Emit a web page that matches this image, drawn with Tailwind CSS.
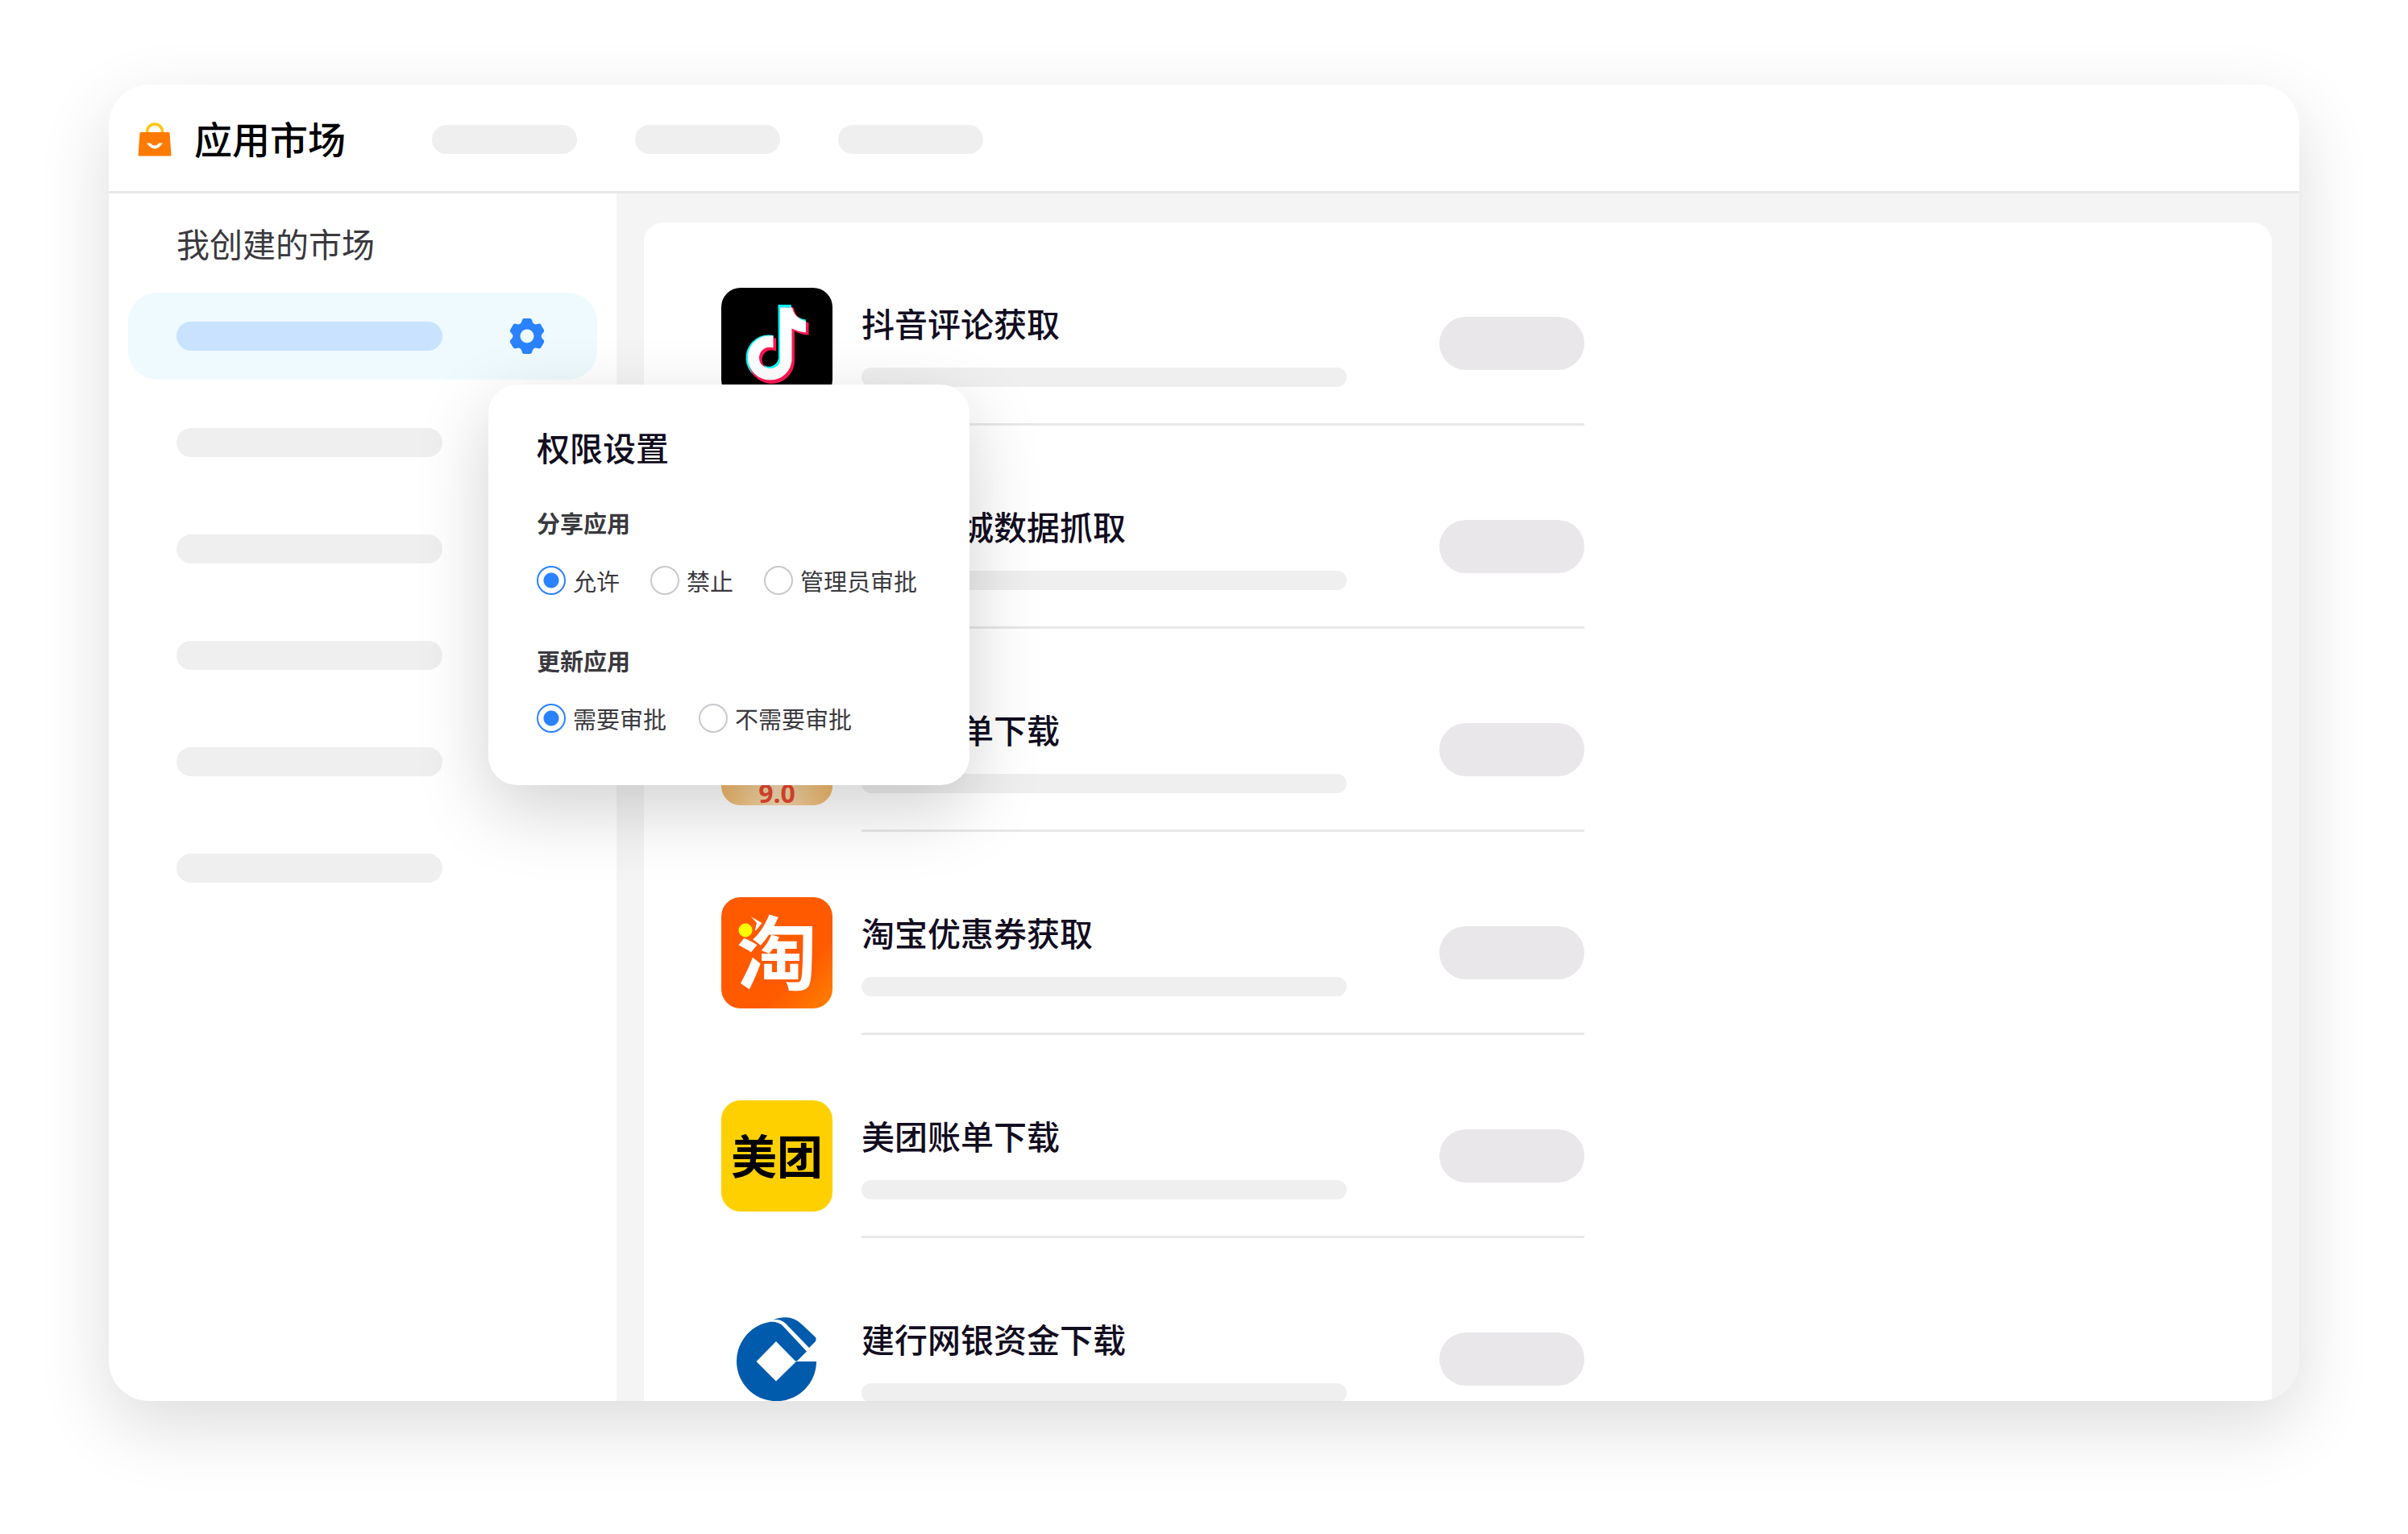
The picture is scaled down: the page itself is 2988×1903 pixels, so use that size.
<!DOCTYPE html>
<html lang="zh-CN">
<head>
<meta charset="utf-8">
<title>应用市场</title>
<script src="https://cdn.jsdelivr.net/npm/@tailwindcss/browser@4"></script>
</head>
<body class="h-screen overflow-hidden bg-white px-[135px] pt-[105px] pb-[165px] font-['Noto_Sans_CJK_SC',sans-serif]">
<div class="relative flex h-full flex-col rounded-[50px] bg-white shadow-[0_30px_90px_rgba(0,0,0,0.14)]">
  <header class="flex h-[135px] shrink-0 items-center border-b-3 border-[#e8e8e8] pt-[3px] pl-[36px]">
    <svg class="h-[42px] w-[42px]" viewBox="0 0 42 42" aria-hidden="true">
      <path d="M11.500 14V11.500a9.500 9.500 0 0 1 19 0V14" fill="none" stroke="#ffc60a" stroke-width="3.500"/>
      <path d="M3.500 12h35q1 0 1 1L41.500 40q0 1.500-1.500 1.500H2Q.5 41.500.5 40L2.500 13q0-1 1-1z" fill="#ff7a00"/>
      <path d="M11 25.500H15.500Q21 31.500 26.500 25.500H31Q21 39.500 11 25.500z" fill="#fff"/>
    </svg>
    <h1 class="ml-[28px] pb-[3px] text-[47px] leading-[70px] font-medium text-black">应用市场</h1>
    <nav class="ml-[107px] flex gap-[72px]" aria-label="导航">
      <a href="#" aria-label="导航一" class="h-[36px] w-[180px] rounded-full bg-[#efefef]"></a>
      <a href="#" aria-label="导航二" class="h-[36px] w-[180px] rounded-full bg-[#efefef]"></a>
      <a href="#" aria-label="导航三" class="h-[36px] w-[180px] rounded-full bg-[#efefef]"></a>
    </nav>
  </header>

  <div class="flex min-h-0 flex-1">
    <aside class="w-[630px] shrink-0 px-[24px] pt-[31px]">
      <h2 class="pl-[60px] text-[41px] leading-[60px] text-[#3a393e]">我创建的市场</h2>
      <ul class="mt-[32px] flex flex-col gap-[24px]">
        <li class="relative flex h-[108px] items-center justify-between rounded-[36px] bg-[#effaff] pr-[64px] pl-[60px]">
          <span class="h-[36px] w-[330px] rounded-full bg-[#c8e2ff]"></span>
          <button type="button" aria-label="权限设置" class="size-[46px]">
            <svg viewBox="-23 -23 46 46" class="size-full" aria-hidden="true">
              <g fill="#2a82ff">
                <circle r="17"/>
                <path id="tooth" d="M-10-14Q-7-16-6.500-18.500Q-6-22-3.500-22H3.500Q6-22 6.500-18.500Q7-16 10-14L0 0z"/>
                <use href="#tooth" transform="rotate(60)"/><use href="#tooth" transform="rotate(120)"/><use href="#tooth" transform="rotate(180)"/><use href="#tooth" transform="rotate(240)"/><use href="#tooth" transform="rotate(300)"/>
              </g>
              <circle r="8.500" fill="#effaff"/>
            </svg>
          </button>

          <section class="absolute top-[114px] left-[447px] z-10 w-[597px] rounded-[36px] bg-white px-[60px] pt-[47px] pb-[61px] shadow-[0_30px_90px_rgba(0,0,0,0.18)]">
            <h3 class="text-[41px] leading-[60px] font-medium text-[#120d1f]">权限设置</h3>
            <fieldset class="mt-[42px]">
              <legend class="text-[29px] leading-[44px] font-bold text-[#3a393e]">分享应用</legend>
              <div class="mt-[28px] flex gap-[38px] text-[29px] leading-[44px] whitespace-nowrap text-[#3a393e]">
                <label class="flex items-center gap-[9px]"><input type="radio" name="share" checked class="size-[36px] appearance-none rounded-full border-2 border-[#c9c9cd] bg-white checked:border-[#2a82ff] checked:bg-[radial-gradient(circle,#2a82ff_9px,white_10px)]">允许</label>
                <label class="flex items-center gap-[9px]"><input type="radio" name="share" class="size-[36px] appearance-none rounded-full border-2 border-[#c9c9cd] bg-white checked:border-[#2a82ff]">禁止</label>
                <label class="flex items-center gap-[9px]"><input type="radio" name="share" class="size-[36px] appearance-none rounded-full border-2 border-[#c9c9cd] bg-white checked:border-[#2a82ff]">管理员审批</label>
              </div>
            </fieldset>
            <fieldset class="mt-[55px]">
              <legend class="text-[29px] leading-[44px] font-bold text-[#3a393e]">更新应用</legend>
              <div class="mt-[28px] flex gap-[40px] text-[29px] leading-[44px] whitespace-nowrap text-[#3a393e]">
                <label class="flex items-center gap-[9px]"><input type="radio" name="update" checked class="size-[36px] appearance-none rounded-full border-2 border-[#c9c9cd] bg-white checked:border-[#2a82ff] checked:bg-[radial-gradient(circle,#2a82ff_9px,white_10px)]">需要审批</label>
                <label class="flex items-center gap-[9px]"><input type="radio" name="update" class="size-[36px] appearance-none rounded-full border-2 border-[#c9c9cd] bg-white checked:border-[#2a82ff]">不需要审批</label>
              </div>
            </fieldset>
          </section>
        </li>
        <li class="flex h-[108px] items-center pl-[60px]"><span class="h-[36px] w-[330px] rounded-full bg-[#efefef]"></span></li>
        <li class="flex h-[108px] items-center pl-[60px]"><span class="h-[36px] w-[330px] rounded-full bg-[#efefef]"></span></li>
        <li class="flex h-[108px] items-center pl-[60px]"><span class="h-[36px] w-[330px] rounded-full bg-[#efefef]"></span></li>
        <li class="flex h-[108px] items-center pl-[60px]"><span class="h-[36px] w-[330px] rounded-full bg-[#efefef]"></span></li>
        <li class="flex h-[108px] items-center pl-[60px]"><span class="h-[36px] w-[330px] rounded-full bg-[#efefef]"></span></li>
      </ul>
    </aside>

    <main class="min-w-0 flex-1 overflow-hidden rounded-br-[50px] bg-[#f4f4f4] px-[34px] pt-[36px]">
      <ul class="h-full overflow-hidden rounded-t-[24px] bg-white pt-[81px] pl-[96px]">
        <li class="flex h-[252px] w-[1071px] gap-[36px]">
          <svg class="size-[138px] shrink-0 rounded-[24px]" viewBox="0 0 138 138" aria-hidden="true">
            <rect width="138" height="138" fill="#000"/>
            <defs><path id="note" d="M72 22.500H88C89 31.500 96 40 106.500 41V56.500C100 56.500 94 54.500 89 51.500V88.500A28.500 28.500 0 1 1 66 60.500V76.500A12 12 0 1 0 72.500 88.500z"/></defs>
            <use href="#note" fill="#00fbff" x="-1.500" y="-1.500"/>
            <use href="#note" fill="#ff1552" x="2" y="2"/>
            <path d="M73 24.500H88C90 34 96 39 105 41.500V55.500C98 55 92.500 53 87.500 50.500V90C86 104 76 114 61 114.500C45 114.500 33 102 33 86.500C33 72 44 60.500 58 59.500H64.500V74.500C54 71 47 79 47 87C47 95 54 100 61 100C68 100 73 95 73 88.500z" fill="#fff"/>
          </svg>
          <div class="flex h-[171px] flex-1 justify-between border-b-3 border-[#e8e8ea]">
            <div><h3 class="mt-[13px] text-[41px] leading-[60px] font-medium text-[#120d1f]">抖音评论获取</h3><div class="mt-[26px] h-[24px] w-[602px] rounded-full bg-[#efefef]"></div></div>
            <button type="button" aria-label="获取" class="mt-[36px] h-[66px] w-[180px] rounded-full bg-[#e9e7ea]"></button>
          </div>
        </li>
        <li class="flex h-[252px] w-[1071px] gap-[36px]">
          <div class="size-[138px] shrink-0 rounded-[24px] bg-[#e1251b]"></div>
          <div class="flex h-[171px] flex-1 justify-between border-b-3 border-[#e8e8ea]">
            <div><h3 class="mt-[13px] text-[41px] leading-[60px] font-medium text-[#120d1f]">京东商城数据抓取</h3><div class="mt-[26px] h-[24px] w-[602px] rounded-full bg-[#efefef]"></div></div>
            <button type="button" aria-label="获取" class="mt-[36px] h-[66px] w-[180px] rounded-full bg-[#e9e7ea]"></button>
          </div>
        </li>
        <li class="flex h-[252px] w-[1071px] gap-[36px]">
          <div class="flex size-[138px] shrink-0 items-end justify-center rounded-[24px] bg-linear-to-r from-[#efb768] via-[#f5dcb4] to-[#efb768] font-['Open_Sans',sans-serif] text-[32px] leading-[30px] font-bold text-[#e8492e]">9.0</div>
          <div class="flex h-[171px] flex-1 justify-between border-b-3 border-[#e8e8ea]">
            <div><h3 class="mt-[13px] text-[41px] leading-[60px] font-medium text-[#120d1f]">微信账单下载</h3><div class="mt-[26px] h-[24px] w-[602px] rounded-full bg-[#efefef]"></div></div>
            <button type="button" aria-label="获取" class="mt-[36px] h-[66px] w-[180px] rounded-full bg-[#e9e7ea]"></button>
          </div>
        </li>
        <li class="flex h-[252px] w-[1071px] gap-[36px]">
          <svg class="size-[138px] shrink-0 rounded-[24px]" viewBox="0 0 138 138" aria-hidden="true">
            <defs><linearGradient id="tb" x1="0" y1="0" x2="1" y2="1"><stop offset=".68" stop-color="#ff5a00"/><stop offset="1" stop-color="#ff8200"/></linearGradient></defs>
            <rect width="138" height="138" fill="url(#tb)"/>
            <text x="19" y="107" font-size="100" font-weight="700" fill="#fff">淘</text>
            <path d="M16 22H35L44 32 40 48 30 50 16 44z" fill="#ff5a00"/>
            <circle cx="30" cy="41" r="8.500" fill="#ff0"/>
          </svg>
          <div class="flex h-[171px] flex-1 justify-between border-b-3 border-[#e8e8ea]">
            <div><h3 class="mt-[13px] text-[41px] leading-[60px] font-medium text-[#120d1f]">淘宝优惠券获取</h3><div class="mt-[26px] h-[24px] w-[602px] rounded-full bg-[#efefef]"></div></div>
            <button type="button" aria-label="获取" class="mt-[36px] h-[66px] w-[180px] rounded-full bg-[#e9e7ea]"></button>
          </div>
        </li>
        <li class="flex h-[252px] w-[1071px] gap-[36px]">
          <div class="flex size-[138px] shrink-0 items-center justify-center rounded-[24px] bg-[#ffd000] pb-[6px] text-[57px] leading-[80px] font-bold text-black">美团</div>
          <div class="flex h-[171px] flex-1 justify-between border-b-3 border-[#e8e8ea]">
            <div><h3 class="mt-[13px] text-[41px] leading-[60px] font-medium text-[#120d1f]">美团账单下载</h3><div class="mt-[26px] h-[24px] w-[602px] rounded-full bg-[#efefef]"></div></div>
            <button type="button" aria-label="获取" class="mt-[36px] h-[66px] w-[180px] rounded-full bg-[#e9e7ea]"></button>
          </div>
        </li>
        <li class="flex h-[252px] w-[1071px] gap-[36px]">
          <svg class="size-[138px] shrink-0" viewBox="0 0 138 138" aria-hidden="true">
            <path d="M61 22.800Q72 22.500 77 28.500L106 59.500 94.500 71Q93 72 91.500 71L68 47 43.500 72 68 96.500 93 72H118A49.500 49.500 0 1 1 61 22.800z" fill="#005bac"/>
            <path d="M64 20.500Q86 12 100 26L117 42Q118.500 44 117 47L109 55 80 25Q73 18.500 64 20.500z" fill="#005bac"/>
          </svg>
          <div class="flex h-[171px] flex-1 justify-between border-b-3 border-[#e8e8ea]">
            <div><h3 class="mt-[13px] text-[41px] leading-[60px] font-medium text-[#120d1f]">建行网银资金下载</h3><div class="mt-[26px] h-[24px] w-[602px] rounded-full bg-[#efefef]"></div></div>
            <button type="button" aria-label="获取" class="mt-[36px] h-[66px] w-[180px] rounded-full bg-[#e9e7ea]"></button>
          </div>
        </li>
      </ul>
    </main>
  </div>
</div>
</body>
</html>
